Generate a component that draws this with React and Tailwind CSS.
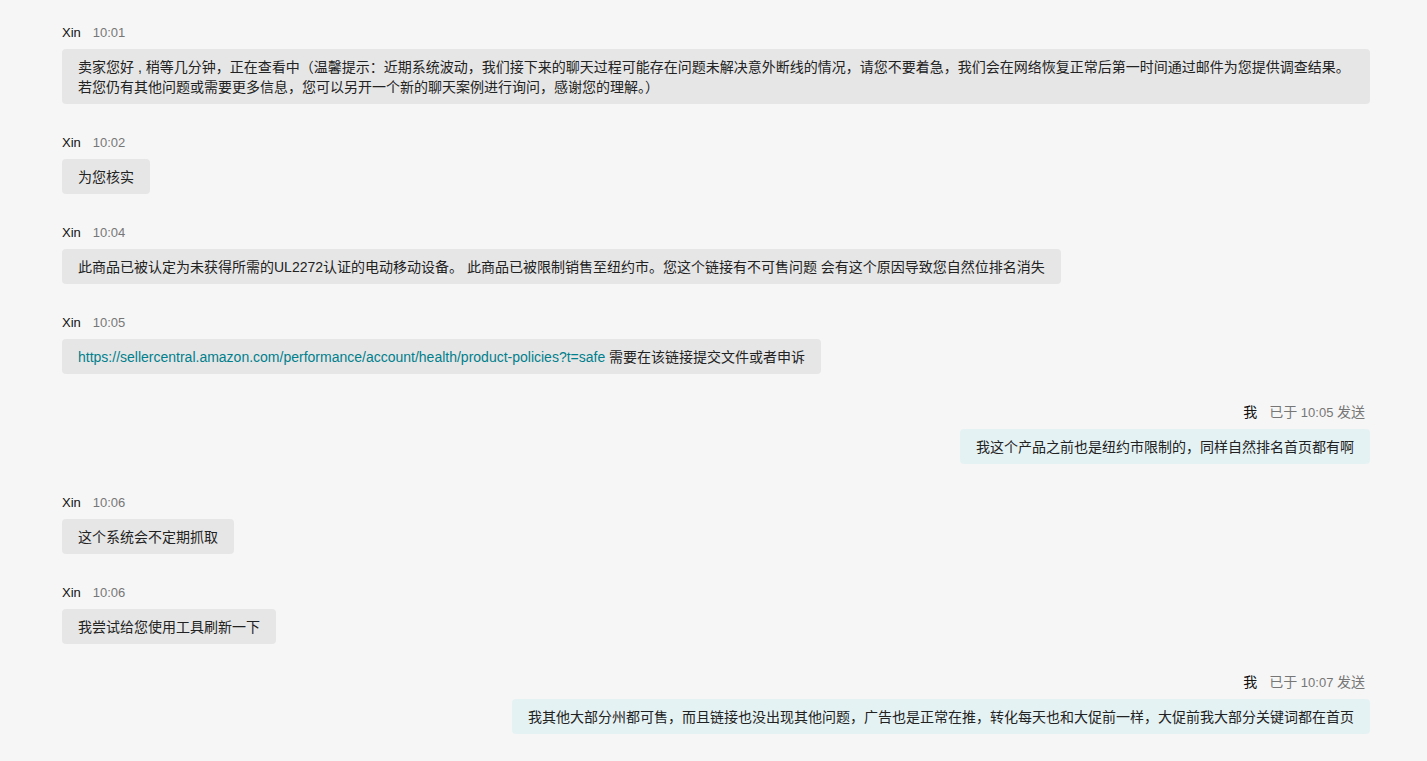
import React from "react";

const FONT = { fontFamily: '"Liberation Sans", Arial, "Noto Sans CJK SC", sans-serif' };

function Header({ name, time, right }) {
  return (
    <div className={`flex items-center gap-3 h-[21px] text-[13px] leading-[21px] ${right ? "justify-end pr-[5px]" : ""}`}>
      <span className="text-[#111111]">{name}</span>
      <span className="text-[#767676]">{time}</span>
    </div>
  );
}

function Message({ name, time, right, full, children }) {
  return (
    <div className={`flex flex-col ${right ? "items-end" : "items-start"}`}>
      <Header name={name} time={time} right={right} />
      <div
        className={`mt-[6px] rounded-[4px] px-4 py-[7.5px] text-[14px] leading-5 text-[#222222] max-w-full ${
          full ? "w-full" : ""
        } ${right ? "bg-[#e5f2f4]" : "bg-[#e6e6e6]"}`}
      >
        {children}
      </div>
    </div>
  );
}

const Me = <span className="text-[14px]">我</span>;
const sent = (t) => (
  <>
    <span className="text-[14px]">已于</span> {t} <span className="text-[14px]">发送</span>
  </>
);

export default function App() {
  return (
    <div style={FONT} className="min-h-[761px] w-full bg-[#f6f6f6] pl-[62px] pr-[57px] pt-[22px] pb-6">
      <div className="flex flex-col gap-[28px]">
        <Message name="Xin" time="10:01" full>
          卖家您好 , 稍等几分钟，正在查看中（温馨提示：近期系统波动，我们接下来的聊天过程可能存在问题未解决意外断线的情况，请您不要着急，我们会在网络恢复正常后第一时间通过邮件为您提供调查结果。
          <br />
          若您仍有其他问题或需要更多信息，您可以另开一个新的聊天案例进行询问，感谢您的理解。）
        </Message>
        <Message name="Xin" time="10:02">
          为您核实
        </Message>
        <Message name="Xin" time="10:04">
          此商品已被认定为未获得所需的UL2272认证的电动移动设备。 此商品已被限制销售至纽约市。您这个链接有不可售问题 会有这个原因导致您自然位排名消失
        </Message>
        <Message name="Xin" time="10:05">
          <a className="text-[#007f8c]">https://sellercentral.amazon.com/performance/account/health/product-policies?t=safe</a> 需要在该链接提交文件或者申诉
        </Message>
        <Message name={Me} time={sent("10:05")} right>
          我这个产品之前也是纽约市限制的，同样自然排名首页都有啊
        </Message>
        <Message name="Xin" time="10:06">
          这个系统会不定期抓取
        </Message>
        <Message name="Xin" time="10:06">
          我尝试给您使用工具刷新一下
        </Message>
        <Message name={Me} time={sent("10:07")} right>
          我其他大部分州都可售，而且链接也没出现其他问题，广告也是正常在推，转化每天也和大促前一样，大促前我大部分关键词都在首页
        </Message>
      </div>
    </div>
  );
}
